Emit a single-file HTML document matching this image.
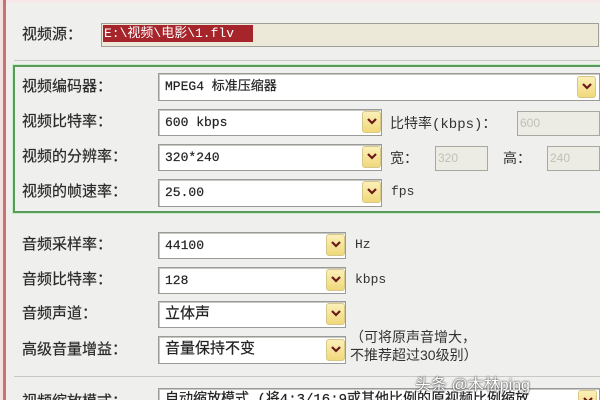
<!DOCTYPE html>
<html><head><meta charset="utf-8"><style>
*{margin:0;padding:0;box-sizing:border-box}
html,body{width:600px;height:400px;overflow:hidden}
body{background:#efefee;position:relative;font-family:"Liberation Sans","Noto Sans CJK SC",sans-serif;color:#222}
.a{position:absolute}
.lbl{position:absolute;font-size:15px;left:22px;line-height:20px;color:#2a2a2a;-webkit-text-stroke:0.2px #2a2a2a}
.box{position:absolute;background:#fff;border:1px solid #9a9a96;box-shadow:inset 1px 1px 0 #c8c8c4;font-family:"Liberation Mono","Noto Sans CJK SC",monospace;font-size:13px;padding-left:6px;color:#222;white-space:nowrap;overflow:hidden;-webkit-text-stroke:0.2px #222}
.btn{position:absolute;width:19px;height:22px;background:linear-gradient(#fbf0b8,#f0d87a);border:1px solid #d8c888;border-radius:3px}
.btn svg{position:absolute;left:4px;top:6px}
.dis{position:absolute;background:#ecebe4;border:1px solid #a8a8a0;color:#c0c0b8;font-size:12px;padding-left:2px;line-height:22px}
.sm{position:absolute;font-size:13px;font-family:"Liberation Mono","Noto Sans CJK SC",monospace;color:#333}
</style></head><body>
<div class="a" style="left:0;top:0;width:3px;height:400px;background:#f3e0e0"></div>
<div class="a" style="left:3px;top:0;width:3px;height:400px;background:#c87272"></div>
<div class="a" style="left:6px;top:0;width:594px;height:3px;background:#f6e8e8"></div>

<div class="lbl" style="top:25px">视频源：</div>
<div class="a" style="left:101px;top:23px;width:498px;height:24px;background:#ece9d8;border:1px solid #a09e96"></div>
<div class="a" style="left:103px;top:25px;height:17px;width:150px;background:#a5252a;color:#fff;font-family:'Liberation Mono','Noto Sans CJK SC',monospace;font-size:13px;line-height:17px;padding-left:1px">E:\视频\电影\1.flv</div>

<div class="a" style="left:14px;top:60px;width:586px;height:1px;background:#c8c8c4"></div>
<div class="a" style="left:13px;top:65px;width:590px;height:148px;border:2px solid #5a9a5a;box-shadow:0 0 0 1px #c8ecc8"></div>

<div class="lbl" style="top:77px">视频编码器：</div>
<div class="box" style="left:158px;top:73px;width:442px;height:28px;line-height:26px">MPEG4 标准压缩器</div>
<div class="btn" style="left:577px;top:76px"><svg width="10" height="8"><path d="M1 1L5 5L9 1" stroke="#6a1a1a" stroke-width="2.2" fill="none"/></svg></div>

<div class="lbl" style="top:112px">视频比特率：</div>
<div class="box" style="left:158px;top:109px;width:224px;height:27px;line-height:25px">600 kbps</div>
<div class="btn" style="left:362px;top:111px"><svg width="10" height="8"><path d="M1 1L5 5L9 1" stroke="#6a1a1a" stroke-width="2.2" fill="none"/></svg></div>
<div class="sm" style="left:390px;top:113px;font-size:14px">比特率(kbps)：</div>
<div class="dis" style="left:517px;top:111px;width:83px;height:25px">600</div>

<div class="lbl" style="top:147px">视频的分辨率：</div>
<div class="box" style="left:158px;top:144px;width:224px;height:27px;line-height:25px">320*240</div>
<div class="btn" style="left:362px;top:146px"><svg width="10" height="8"><path d="M1 1L5 5L9 1" stroke="#6a1a1a" stroke-width="2.2" fill="none"/></svg></div>
<div class="sm" style="left:390px;top:148px;font-size:14px">宽：</div>
<div class="dis" style="left:435px;top:146px;width:53px;height:25px">320</div>
<div class="sm" style="left:503px;top:148px;font-size:14px">高：</div>
<div class="dis" style="left:547px;top:146px;width:53px;height:25px">240</div>

<div class="lbl" style="top:182px">视频的帧速率：</div>
<div class="box" style="left:158px;top:179px;width:224px;height:28px;line-height:26px">25.00</div>
<div class="btn" style="left:362px;top:181px"><svg width="10" height="8"><path d="M1 1L5 5L9 1" stroke="#6a1a1a" stroke-width="2.2" fill="none"/></svg></div>
<div class="sm" style="left:391px;top:184px">fps</div>

<div class="lbl" style="top:235px">音频采样率：</div>
<div class="box" style="left:158px;top:232px;width:188px;height:27px;line-height:25px">44100</div>
<div class="btn" style="left:326px;top:234px"><svg width="10" height="8"><path d="M1 1L5 5L9 1" stroke="#6a1a1a" stroke-width="2.2" fill="none"/></svg></div>
<div class="sm" style="left:355px;top:237px">Hz</div>

<div class="lbl" style="top:270px">音频比特率：</div>
<div class="box" style="left:158px;top:267px;width:188px;height:27px;line-height:25px">128</div>
<div class="btn" style="left:326px;top:269px"><svg width="10" height="8"><path d="M1 1L5 5L9 1" stroke="#6a1a1a" stroke-width="2.2" fill="none"/></svg></div>
<div class="sm" style="left:355px;top:272px">kbps</div>

<div class="lbl" style="top:304px">音频声道：</div>
<div class="box" style="left:158px;top:301px;width:188px;height:27px;line-height:25px;font-size:15px">立体声</div>
<div class="btn" style="left:326px;top:303px"><svg width="10" height="8"><path d="M1 1L5 5L9 1" stroke="#6a1a1a" stroke-width="2.2" fill="none"/></svg></div>

<div class="lbl" style="top:340px">高级音量增益：</div>
<div class="box" style="left:158px;top:336px;width:188px;height:28px;line-height:26px;font-size:15px">音量保持不变</div>
<div class="btn" style="left:326px;top:339px"><svg width="10" height="8"><path d="M1 1L5 5L9 1" stroke="#6a1a1a" stroke-width="2.2" fill="none"/></svg></div>
<div class="a" style="left:350px;top:328px;font-size:14px;line-height:18px;color:#333">（可将原声音增大，<br>不推荐超过30级别）</div>

<div class="a" style="left:14px;top:376px;width:586px;height:1px;background:#c8c8c4"></div>
<div class="lbl" style="top:392px">视频缩放模式：</div>
<div class="box" style="left:158px;top:388px;width:442px;height:20px;line-height:22px;font-size:14px">自动缩放模式 (将4:3/16:9或其他比例的原视频比例缩放</div>
<div class="btn" style="left:578px;top:390px"><svg width="10" height="8"><path d="M1 1L5 5L9 1" stroke="#6a1a1a" stroke-width="2.2" fill="none"/></svg></div>
<div class="a" style="left:415px;top:371px;font-size:16px;color:#fff;text-shadow:0 0 2px #444,0 0 1px #333;white-space:nowrap">头条 @木林ping</div>
</body></html>
